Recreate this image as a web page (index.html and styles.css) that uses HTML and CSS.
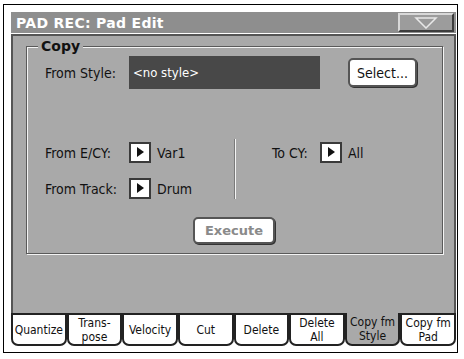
FILE: index.html
```html
<!DOCTYPE html>
<html lang="en">
<head>
  <meta charset="UTF-8">
  <title>PAD REC: Pad Edit</title>
  <link rel="stylesheet" href="styles.css">
</head>
<body>
  <div class="frame">
    <div class="titlebar">
      <span class="title">PAD REC: Pad Edit</span>
      <button class="menu-btn">
        <svg width="24" height="12" viewBox="0 0 24 12"><polygon points="2,1 22,1 12,11" fill="#9a9a9a" stroke="#e8e8e8" stroke-width="1.5"/></svg>
      </button>
    </div>

    <div class="panel">
      <div class="group">
        <span class="group-title">Copy</span>

        <div class="row-style">
          <span class="label">From Style:</span>
          <div class="style-box">&lt;no style&gt;</div>
          <button class="btn select-btn">Select...</button>
        </div>

        <div class="cy-section">
          <div class="col-left">
            <div class="param">
              <span class="label">From E/CY:</span>
              <span class="arrow-box"></span>
              <span class="value">Var1</span>
            </div>
            <div class="param">
              <span class="label">From Track:</span>
              <span class="arrow-box"></span>
              <span class="value">Drum</span>
            </div>
          </div>
          <div class="separator"></div>
          <div class="col-right">
            <div class="param">
              <span class="label short">To CY:</span>
              <span class="arrow-box"></span>
              <span class="value">All</span>
            </div>
          </div>
        </div>

        <div class="execute-row">
          <button class="btn execute-btn">Execute</button>
        </div>
      </div>
    </div>

    <div class="tabs">
      <div class="tab">Quantize</div>
      <div class="tab">Trans-<br>pose</div>
      <div class="tab">Velocity</div>
      <div class="tab">Cut</div>
      <div class="tab">Delete</div>
      <div class="tab">Delete<br>All</div>
      <div class="tab active">Copy fm<br>Style</div>
      <div class="tab">Copy fm<br>Pad</div>
    </div>
  </div>
</body>
</html>
```

FILE: styles.css
```css
* {
  margin: 0;
  padding: 0;
  box-sizing: border-box;
}

body {
  background-color: #ffffff;
  font-family: 'DejaVu Sans Condensed', 'DejaVu Sans', sans-serif;
  color: #111;
}

.frame {
  margin: 4px 0 0 3px;
  width: 455px;
  height: 349px;
  border: 1px solid #000;
  padding: 7px 1px 6px 7px;
  background-color: #ffffff;
}

/* Title bar */
.titlebar {
  height: 21px;
  margin-bottom: 1px;
  background-color: #8e8e8e;
  display: flex;
  align-items: center;
  justify-content: space-between;
}

.title {
  font-family: 'DejaVu Sans', sans-serif;
  font-weight: bold;
  font-size: 14px;
  color: #ffffff;
  padding-left: 5px;
  letter-spacing: 0.3px;
}

.menu-btn {
  width: 56px;
  height: 19px;
  margin-right: 2px;
  border: 2px solid #3c3c3c;
  border-top-color: #d8d8d8;
  border-left-color: #d8d8d8;
  background-color: #9c9c9c;
  display: flex;
  align-items: center;
  justify-content: center;
}

/* Main panel */
.panel {
  height: 279px;
  background-color: #a9a9a9;
  border: 2px solid #555;
  border-bottom: none;
  padding-top: 10px;
}

.group {
  position: relative;
  margin: 0 11px 0 13px;
  height: 208px;
  border: 1px solid #5a5a5a;
  box-shadow: inset 1px 1px 0 #f4f4f4, 1px 1px 0 #f4f4f4;
  font-size: 14px;
}

.group-title {
  position: absolute;
  top: -9px;
  left: 11px;
  padding: 0 3px;
  background-color: #a9a9a9;
  font-family: 'DejaVu Sans', sans-serif;
  font-weight: bold;
  font-size: 14px;
}

.label {
  width: 84px;
  flex-shrink: 0;
}

.label.short {
  width: 48px;
}

.row-style {
  display: flex;
  align-items: center;
  margin-top: 9px;
  padding-left: 18px;
}

.style-box {
  width: 191px;
  height: 33px;
  background-color: #484848;
  color: #ffffff;
  font-size: 13px;
  padding-left: 4px;
  display: flex;
  align-items: center;
}

.btn {
  font-family: 'DejaVu Sans Condensed', 'DejaVu Sans', sans-serif;
  background-color: #ffffff;
  border: 2px solid #555;
  border-radius: 5px;
  box-shadow: 1px 1px 0 #333;
}

.select-btn {
  width: 69px;
  height: 29px;
  margin-left: 28px;
  font-size: 14px;
  color: #111;
}

.cy-section {
  display: flex;
  margin-top: 50px;
  height: 60px;
}

.col-left {
  width: 189px;
  margin-left: 18px;
  padding-top: 3px;
  display: flex;
  flex-direction: column;
  gap: 15px;
}

.separator {
  width: 2px;
  border-left: 1px solid #7a7a7a;
  border-right: 1px solid #f4f4f4;
}

.col-right {
  padding-left: 36px;
  padding-top: 3px;
}

.param {
  display: flex;
  align-items: center;
  height: 21px;
}

.arrow-box {
  width: 22px;
  height: 21px;
  border: 2px solid #3a3a3a;
  background-color: #ffffff;
  position: relative;
  flex-shrink: 0;
}

.arrow-box::after {
  content: "";
  position: absolute;
  left: 6px;
  top: 3px;
  border-left: 7px solid #111;
  border-top: 5.5px solid transparent;
  border-bottom: 5.5px solid transparent;
}

.value {
  margin-left: 6px;
}

.execute-row {
  display: flex;
  justify-content: center;
  margin-top: 18px;
  padding-right: 1px;
}

.execute-btn {
  width: 82px;
  height: 27px;
  font-family: 'DejaVu Sans', sans-serif;
  font-weight: bold;
  font-size: 13px;
  color: #8a8a8a;
}

/* Tabs */
.tabs {
  display: grid;
  grid-template-columns: repeat(8, 1fr);
  height: 33px;
}

.tab {
  background-color: #ffffff;
  border: 2px solid #222;
  border-radius: 0 0 7px 7px;
  font-size: 12px;
  line-height: 14px;
  text-align: center;
  display: flex;
  align-items: center;
  justify-content: center;
}

.tab.active {
  background-color: #a9a9a9;
  border-top: none;
}
```
